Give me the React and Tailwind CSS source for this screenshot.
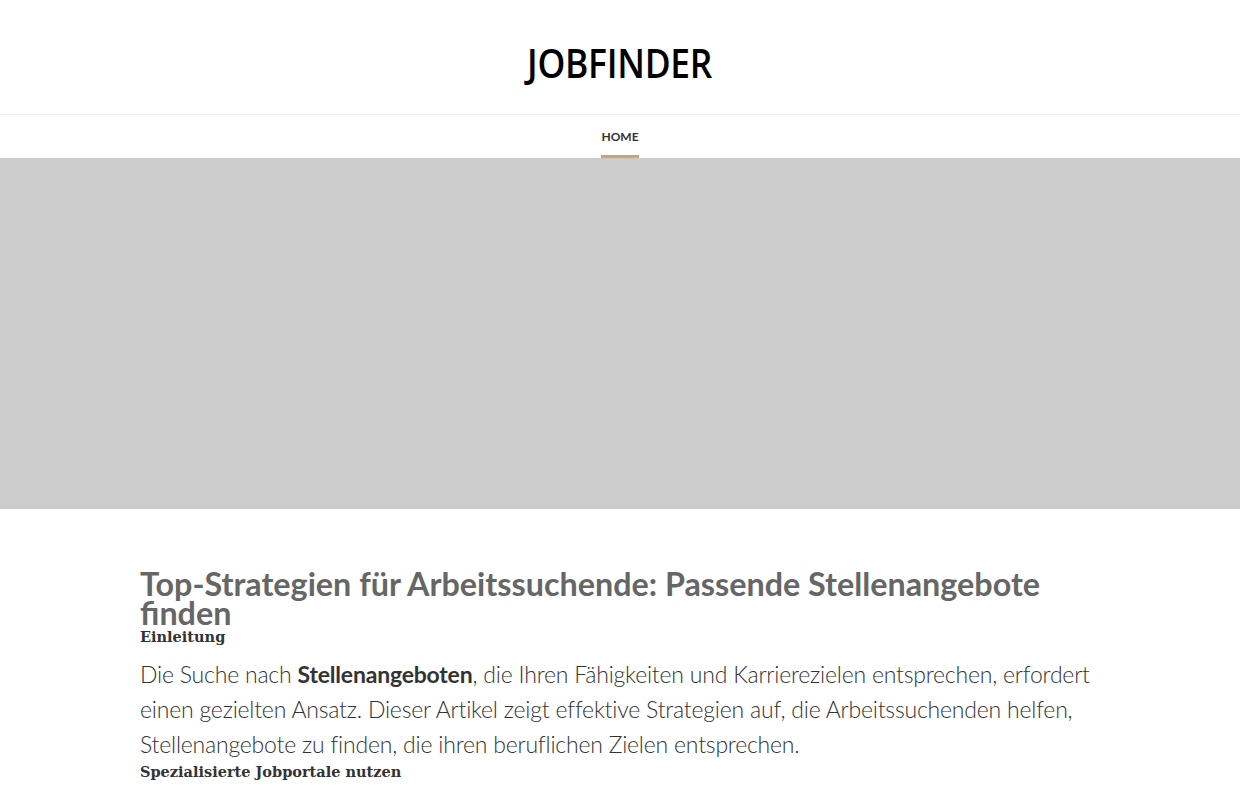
import React from 'react';

const App = () => {
  return (
    <div className="min-h-screen bg-white font-['Lato',sans-serif]">
      <header className="h-[115px] flex items-center justify-center border-b border-[#eeeeee]">
        <h1 className="inline-block pt-[12px] text-[40px] font-semibold tracking-[-0.3px] text-black font-['Open_Sans',sans-serif] scale-x-[0.885] leading-none">
          JOBFINDER
        </h1>
      </header>
      <nav className="h-[43px] flex justify-center">
        <a href="#" className="flex flex-col justify-end items-center">
          <span className="text-[12px] font-bold uppercase text-[#333] leading-none mb-[12px]">Home</span>
          <span className="h-[3px] w-[38px] bg-[#c6a86b]"></span>
        </a>
      </nav>
      <div className="h-[351px] bg-[#cccccc]"></div>
      <main className="w-[960px] mx-auto pt-[60px]">
        <h2 className="text-[32.3px] font-bold leading-[29px] text-[#666666]">
          Top-Strategien für Arbeitssuchende: Passende Stellenangebote finden
        </h2>
        <h3 className="mt-0 text-[14.5px] font-bold text-[#333] font-['DejaVu_Serif',serif] leading-[20px]">
          Einleitung
        </h3>
        <p className="mt-[10px] text-[23px] tracking-[-0.2px] font-light leading-[35px] text-[#333] font-['Lato',sans-serif]">
          Die Suche nach <strong className="font-bold">Stellenangeboten</strong>, die Ihren Fähigkeiten und Karrierezielen entsprechen, erfordert einen gezielten Ansatz. Dieser Artikel zeigt effektive Strategien auf, die Arbeitssuchenden helfen, Stellenangebote zu finden, die ihren beruflichen Zielen entsprechen.
        </p>
        <h3 className="mt-0 text-[14.5px] font-bold text-[#333] font-['DejaVu_Serif',serif] leading-[20px]">
          Spezialisierte Jobportale nutzen
        </h3>
      </main>
    </div>
  );
};

export default App;
